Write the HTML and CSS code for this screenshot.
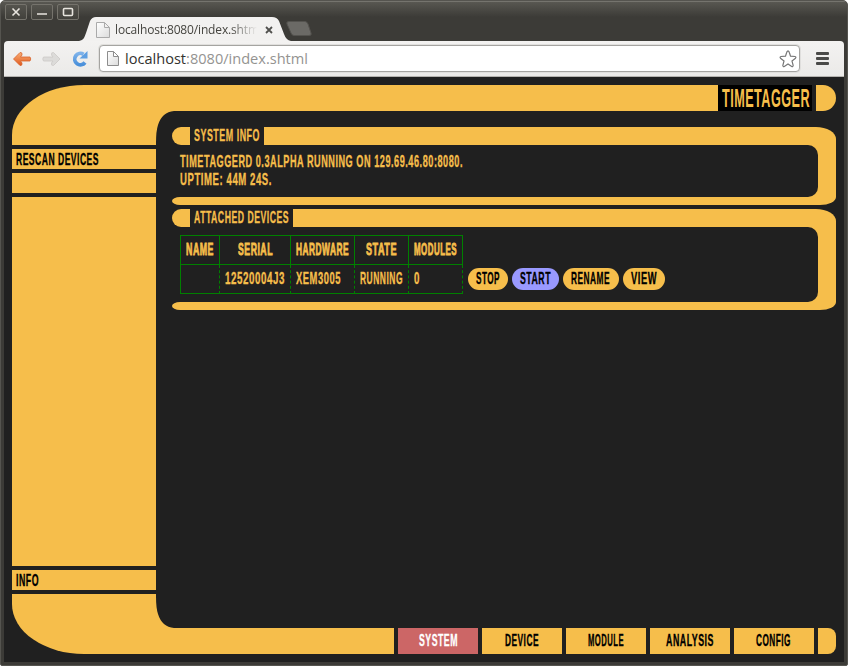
FILE: index.html
```
<!DOCTYPE html>
<html lang="en"><head><meta charset="utf-8"><title>Timetagger</title><link rel="stylesheet" href="styles.css"></head>
<body>
<div class="window">
  <header class="titlebar">
    <div class="controls">
      <button class="ctl"><svg width="20" height="14"><path d="M6.500 3.500l7 7m0-7l-7 7"/></svg></button>
      <button class="ctl"><svg width="20" height="14"><path d="M5 9h10" stroke-width="2"/></svg></button>
      <button class="ctl"><svg width="20" height="14"><rect x="5.500" y="3.500" width="9" height="7" rx="1"/></svg></button>
    </div>
    <div class="tab">
      <svg class="tab-shape" width="212" height="25"><path d="M0 25C5 24 5 22 7 17L11 5Q13 1 17 1H193Q198 1 200 5L205 18Q207 24 212 25Z"/></svg>
      <svg class="page" width="14" height="16"><defs><linearGradient id="p" x2="1" y2="1"><stop stop-color="#fff"/><stop offset="1" stop-color="#dcdcdc"/></linearGradient></defs><path d="M.5.5h8l5 5v10H.5zM8.500.5v5h5"/></svg>
      <span class="tab-title">localhost:8080/index.shtml</span>
      <svg class="tab-close" width="8" height="8"><path d="M1 1l6 6M7 1L1 7"/></svg>
    </div>
    <svg class="newtab" width="26" height="16"><path d="M3 .5h16q2 0 3 2.500l3 9q1 2.500-2 2.500H8q-2 0-3-2.500L1 3Q0 .5 3 .5z"/></svg>
  </header>
  <div class="toolbar">
    <svg class="nav-icons" width="80" height="20">
      <defs><linearGradient id="o" x2="0" y2="1"><stop stop-color="#f9b077"/><stop offset="1" stop-color="#e0581c"/></linearGradient><linearGradient id="b" x2="0" y2="1"><stop stop-color="#7db2ea"/><stop offset="1" stop-color="#4a90da"/></linearGradient></defs>
      <path fill="url(#o)" stroke="#d8632c" stroke-width=".8" stroke-linejoin="round" d="M1.500 10L8 3.500Q10.500 3 10 6L8.500 8H18Q19.500 10 18 12H8.500L10 14Q10.500 17 8 16.500Z"/>
      <path fill="#dcdbd9" stroke="#cbc9c6" stroke-width=".8" stroke-linejoin="round" d="M48 10L41.500 3.500Q39 3 39.500 6L41 8H31.500Q30 10 31.500 12H41L39.500 14Q39 17 41.500 16.500Z"/>
      <path fill="none" stroke="url(#b)" stroke-width="3.800" d="M71.500 5.300A5.700 5.700 0 1 0 73 13.500"/><path fill="#5f9fe2" d="M75.500 2v7.500h-8z"/>
    </svg>
    <div class="address">
      <svg class="page" width="12" height="15"><path d="M.5.5h6l5 5v9H.5zM6.500.5v5h5"/></svg>
      <svg class="url" width="190" height="22"><text x="0" y="16" textLength="183" lengthAdjust="spacingAndGlyphs">localhost<tspan>:8080/index.shtml</tspan></text></svg>
      <svg class="star" width="18" height="18"><path d="M9 .9Q10 1 10.500 3L11.500 6.200L16 6.500Q17.500 7 16.500 8.200L13 11L14.200 15.500Q14 17 12.700 16.500L9 14L5.300 16.500Q4 17 3.800 15.500L5 11L1.500 8.200Q.5 7 2 6.500L6.500 6.200L7.500 3Q8 1 9 .9z"/></svg>
    </div>
    <div class="menu"><i></i><i></i><i></i></div>
  </div>

  <div class="lcars">
    <aside class="side">
      <div class="elbow top"></div>
      <a class="block"><svg class="t" width="83" height="20"><text y="16" textLength="83" lengthAdjust="spacingAndGlyphs">RESCAN DEVICES</text></svg></a>
      <div class="block"></div>
      <div class="block fill"></div>
      <a class="block"><svg class="t" width="23" height="20"><text y="16" textLength="23" lengthAdjust="spacingAndGlyphs">INFO</text></svg></a>
      <div class="elbow bottom"></div>
    </aside>
    <main class="main">
      <div class="topbar">
        <div class="bar"><svg class="inner" width="18" height="32"><path d="M0 0H18Q6 1 2 14Q0 20 0 32Z"/></svg></div>
        <h1><svg class="t big" width="88" height="26"><text y="22" textLength="88" lengthAdjust="spacingAndGlyphs">TIMETAGGER</text></svg></h1>
        <div class="endcap"></div>
      </div>
      <div class="content">
        <section class="panel">
          <div class="head"><i class="cap"></i><h2><svg class="t" width="66" height="18"><text y="14" textLength="66" lengthAdjust="spacingAndGlyphs">SYSTEM INFO</text></svg></h2><i class="rule"></i></div>
          <div class="frame"><div class="body info">
            <svg class="t" width="284" height="18"><text y="14" textLength="283" lengthAdjust="spacingAndGlyphs">TIMETAGGERD 0.3ALPHA RUNNING ON 129.69.46.80:8080.</text></svg>
            <svg class="t" width="92" height="18"><text y="14" textLength="92" lengthAdjust="spacingAndGlyphs">UPTIME: 44M 24S.</text></svg>
          </div></div>
          <div class="foot"></div>
        </section>
        <section class="panel">
          <div class="head"><i class="cap"></i><h2><svg class="t" width="95" height="18"><text y="14" textLength="95" lengthAdjust="spacingAndGlyphs">ATTACHED DEVICES</text></svg></h2><i class="rule"></i></div>
          <div class="frame"><div class="body devices">
            <div class="grid">
              <div class="th"><svg class="t" width="28" height="18"><text y="14" textLength="28" lengthAdjust="spacingAndGlyphs">NAME</text></svg></div>
              <div class="th"><svg class="t" width="35" height="18"><text y="14" textLength="35" lengthAdjust="spacingAndGlyphs">SERIAL</text></svg></div>
              <div class="th"><svg class="t" width="53" height="18"><text y="14" textLength="53" lengthAdjust="spacingAndGlyphs">HARDWARE</text></svg></div>
              <div class="th"><svg class="t" width="31" height="18"><text y="14" textLength="31" lengthAdjust="spacingAndGlyphs">STATE</text></svg></div>
              <div class="th"><svg class="t" width="43" height="18"><text y="14" textLength="43" lengthAdjust="spacingAndGlyphs">MODULES</text></svg></div>
              <div class="td"></div>
              <div class="td"><svg class="t" width="60" height="18"><text y="14" textLength="60" lengthAdjust="spacingAndGlyphs">12520004J3</text></svg></div>
              <div class="td"><svg class="t" width="45" height="18"><text y="14" textLength="45" lengthAdjust="spacingAndGlyphs">XEM3005</text></svg></div>
              <div class="td"><svg class="t" width="43" height="18"><text y="14" textLength="43" lengthAdjust="spacingAndGlyphs">RUNNING</text></svg></div>
              <div class="td"><svg class="t" width="6" height="18"><text y="14" textLength="6" lengthAdjust="spacingAndGlyphs">0</text></svg></div>
            </div>
            <div class="actions">
              <button class="pill"><svg class="t" width="24" height="22"><text y="16" textLength="24" lengthAdjust="spacingAndGlyphs">STOP</text></svg></button>
              <button class="pill blue"><svg class="t" width="31" height="22"><text y="16" textLength="31" lengthAdjust="spacingAndGlyphs">START</text></svg></button>
              <button class="pill"><svg class="t" width="40" height="22"><text y="16" textLength="39" lengthAdjust="spacingAndGlyphs">RENAME</text></svg></button>
              <button class="pill"><svg class="t" width="26" height="22"><text y="16" textLength="26" lengthAdjust="spacingAndGlyphs">VIEW</text></svg></button>
            </div>
          </div></div>
          <div class="foot"></div>
        </section>
      </div>
      <nav class="bottombar">
        <div class="bar"><svg class="inner low" width="18" height="32"><path d="M0 0H18Q6 1 2 14Q0 20 0 32Z"/></svg></div>
        <a class="active"><svg class="t" width="39" height="26"><text y="18" textLength="39" lengthAdjust="spacingAndGlyphs">SYSTEM</text></svg></a>
        <a><svg class="t" width="34" height="26"><text y="18" textLength="34" lengthAdjust="spacingAndGlyphs">DEVICE</text></svg></a>
        <a><svg class="t" width="36" height="26"><text y="18" textLength="36" lengthAdjust="spacingAndGlyphs">MODULE</text></svg></a>
        <a><svg class="t" width="48" height="26"><text y="18" textLength="48" lengthAdjust="spacingAndGlyphs">ANALYSIS</text></svg></a>
        <a><svg class="t" width="36" height="26"><text y="18" textLength="35" lengthAdjust="spacingAndGlyphs">CONFIG</text></svg></a>
        <div class="endcap"></div>
      </nav>
    </main>
  </div>
</div>
</body></html>
```
FILE: styles.css
```
*{box-sizing:border-box}
html{background:#fff}
body{margin:0;width:848px;height:666px;overflow:hidden}
svg{display:block;flex:none}
button{appearance:none;border:0;padding:0;margin:0;background:none}
.window{width:848px;height:666px;background:#3c3b37;border:1px solid #55544f;border-radius:5px 5px 2px 2px;padding:0 3px 3px;display:flex;flex-direction:column;overflow:hidden}
.titlebar{height:40px;margin:0 -3px;padding-left:3px;background:linear-gradient(#5a5953,#3c3b37 16px);display:flex;flex:none;align-items:flex-start;box-shadow:inset 0 1px #75746e}
.controls{display:flex;gap:4px;padding:3px 0 0 1px}
.ctl{width:22px;height:16px;border:1px solid #75736c;border-radius:2px;background:linear-gradient(#55544e,#42413c)}
.ctl path,.ctl rect{fill:none;stroke:#e8e5df;stroke-width:1.600}
.tab{width:212px;height:25px;margin:15px 0 0 0;position:relative;display:flex;align-items:center;padding:2px 0 0 17px}
.tab-shape{position:absolute;left:0;top:0;fill:#f2f1f0}
.page{fill:url(#p);stroke:#8d8d8d;position:relative}
.tab .page{stroke:#aaa}
.tab-title{position:relative;width:142px;margin-left:5px;overflow:hidden;white-space:nowrap;font:12px/16px "Open Sans","Noto Sans",sans-serif;letter-spacing:-.15px;color:#45443f;-webkit-mask-image:linear-gradient(90deg,#000 115px,transparent 142px);mask-image:linear-gradient(90deg,#000 115px,transparent 142px)}
.tab-close{position:relative;margin-left:8px;fill:none;stroke:#50504d;stroke-width:1.800}
.newtab{margin:20px 0 0 -5px;fill:#6b6a66;stroke:#54534f}
.toolbar{height:36px;flex:none;background:linear-gradient(#f3f2f1,#ebeae8);border-bottom:1px solid #b5b3af;border-radius:4px 4px 0 0;display:flex;align-items:center;padding-left:8px}
.nav-icons{width:80px}
.address{width:701px;height:27px;margin-left:7px;border:1px solid #a5a4a1;border-radius:4px;background:#fff;display:flex;align-items:center;padding:0 2px 0 7px;box-shadow:0 0 0 1px #e0dfdd}
.url{margin-left:6px;font:15px "Open Sans","Noto Sans",sans-serif;fill:#33322f}
.url tspan{fill:#949391}
.star{margin-left:auto;fill:#fff;stroke:#777;stroke-width:1.200}
.menu{display:flex;flex-direction:column;gap:2px;margin-left:16px}
.menu i{width:13px;height:3px;background:#4a4a48;border-radius:1px}
.lcars{flex:1;min-height:0;background:#202020;display:flex;padding:8px}
.side{width:144px;display:flex;flex-direction:column;gap:4px}
.side>*{background:#f6be4b}
.elbow{height:60px}
.elbow.top{border-radius:72px 0 0 0/50px 0 0 0}
.elbow.bottom{border-radius:0 0 0 72px/0 0 0 50px}
.block{height:20px;padding-left:4px}
.block.fill{flex:1}
.t{font:bold 17px "Liberation Sans Narrow","Liberation Sans",sans-serif;letter-spacing:1px;fill:#f6be4b;stroke:#f6be4b;stroke-width:.35px;overflow:visible}
.t.big{font-size:26px;stroke-width:0}
.th .t{stroke-width:.9px}
.side .t,.pill .t,.bottombar .t{fill:#000;stroke:#000}
.main{flex:1;display:flex;flex-direction:column}
.topbar,.bottombar{display:flex;gap:4px;height:26px;flex:none}
.bar{flex:1;background:#f6be4b;position:relative}
.inner{position:absolute;left:0;top:26px;fill:#f6be4b}
.inner.low{top:-32px;transform:scaleY(-1)}
.topbar .bar{margin-right:-4px}
h1{margin:0;width:94px;background:#000;padding-left:4px}
.endcap{width:20px;background:#f6be4b;border-radius:0 13px 13px 0}
.bottombar .endcap{width:18px;border-radius:0 8px 8px 0}
.bottombar a{width:80px;background:#f6be4b;display:flex;justify-content:center}
.bottombar a.active{background:#cc6666}
.bottombar .active .t{fill:#fff;stroke:#fff}
.content{flex:1;display:flex;flex-direction:column;gap:4px;padding:16px 0 0 16px}
.head{display:flex;height:18px}
.cap{width:18px;background:#f6be4b;border-radius:9px 0 0 9px}
.rule{flex:1;background:#f6be4b;border-radius:0 20px 0 0/0 12px 0 0}
h2{margin:0;padding:0 4px}
.frame{padding-right:18px;background:linear-gradient(#f6be4b,#f6be4b) right/40px 100% no-repeat}
.body{background:#202020;border-radius:0 10px 10px 0;padding:8px}
.foot{height:8px;background:#f6be4b;border-radius:8px 0 16px 8px/4px 0 8px 4px}
.info{height:52px}
.devices{height:75px;display:flex}
.grid{width:283px;height:59px;display:grid;grid-template-columns:39px 71px 64px 54px 54px;grid-template-rows:29px 29px;border:1px solid #008000;border-width:1px 0 1px 1px}
.th,.td{border-right:1px solid #008000;padding:5px 5px 0}
.th{border-bottom:1px solid #008000;display:flex;justify-content:center}
.td{border-right-style:dashed}
.actions{display:flex;gap:4px;padding:33px 0 0 5px}
.pill{height:22px;border-radius:11px;background:#f6be4b;padding:0 8px}
.blue{background:#9999ff}
```
